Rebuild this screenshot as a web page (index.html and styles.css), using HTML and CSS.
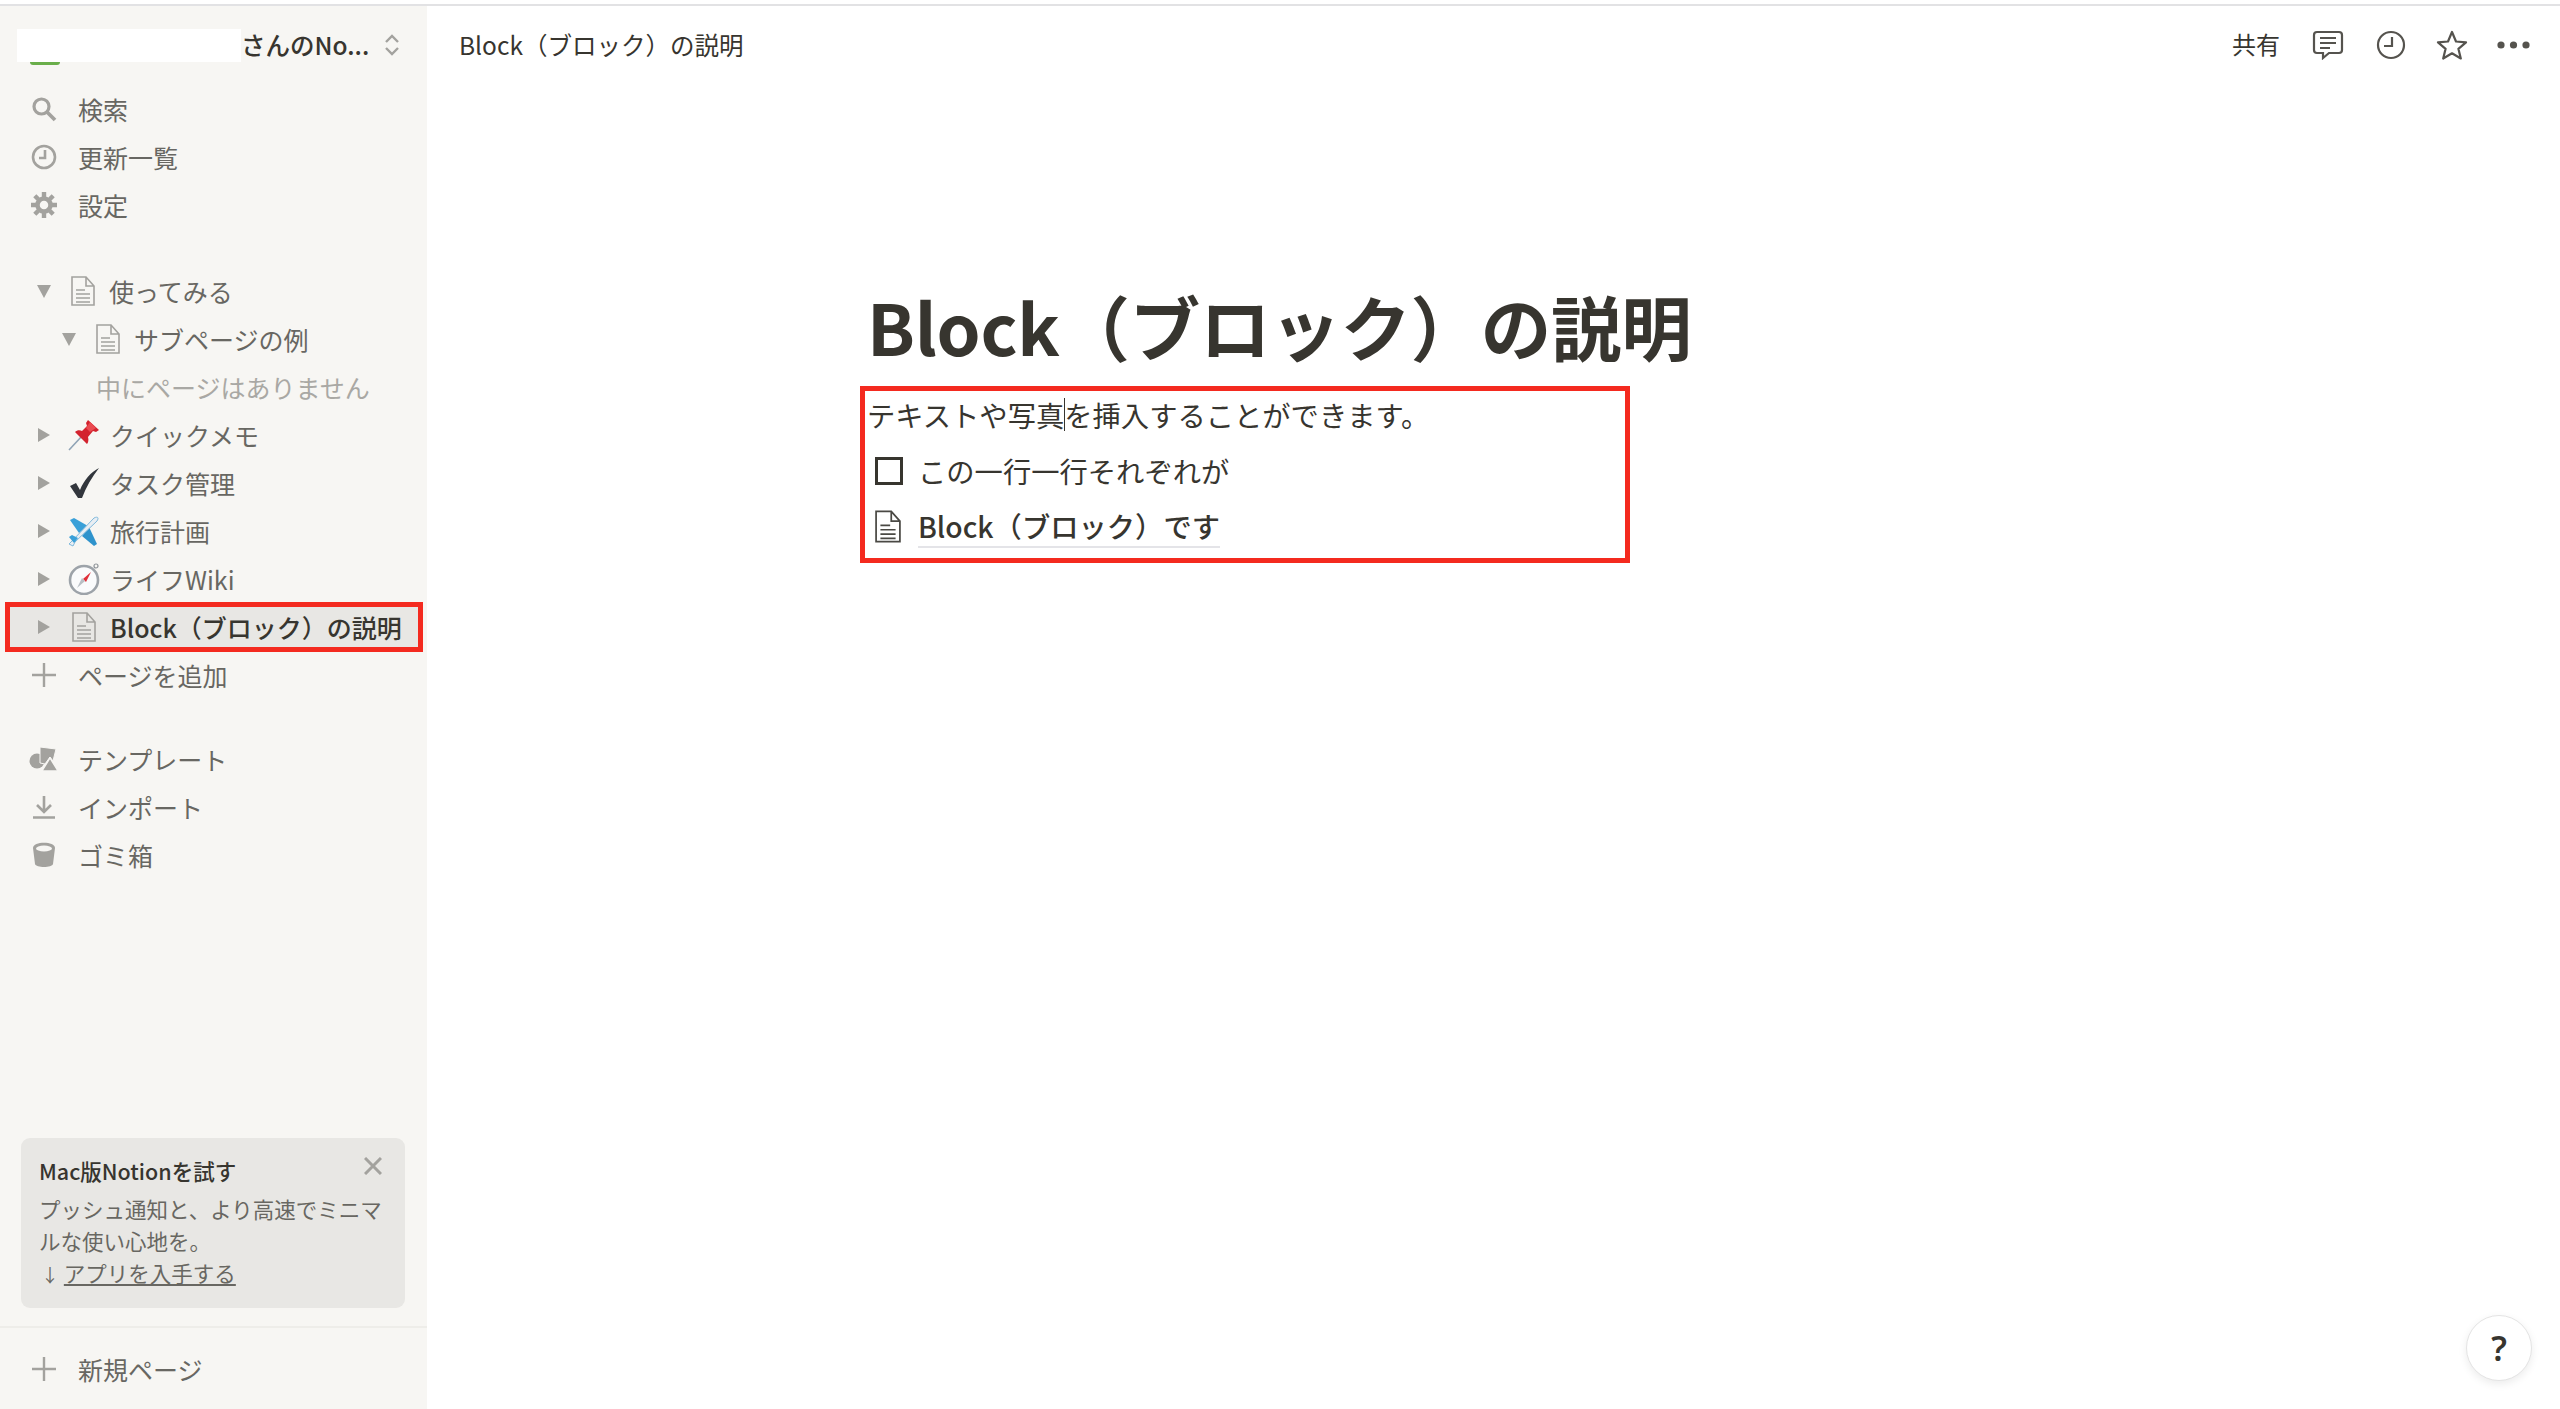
FILE: index.html
```html
<!DOCTYPE html>
<html lang="ja">
  <head>
    <meta charset="UTF-8" />
    <title>Block（ブロック）の説明</title>
    <link rel="stylesheet" href="styles.css">
  </head>
  <body>
    <svg class="defs" width="0" height="0" aria-hidden="true">
      <symbol id="doc" viewBox="0 0 24 30">
        <path d="M1 1h14l8 9v19H1z M15 1v9h8 M5 14h9 M5 18h14 M5 22h14 M5 26h14" fill="none" stroke="currentColor" stroke-width="1.6" />
      </symbol>
      <symbol id="plus" viewBox="0 0 24 24">
        <path d="M12 0v24M0 12h24" fill="none" stroke="currentColor" stroke-width="2.4" />
      </symbol>
    </svg>
    <div class="topline"></div>
    <div class="app">
      <aside class="sidebar">
        <div class="workspace">
          <div class="redacted"><span class="green"></span></div>
          <span class="workspace-name">さんのNo...</span>
          <svg class="updown" width="16" height="22" viewBox="0 0 16 22"><path d="M2 8l6-6 6 6M2 14l6 6 6-6" fill="none" stroke="#a3a29e" stroke-width="2.4" /></svg>
        </div>

        <nav class="group">
          <div class="row">
            <svg class="nav-icon" width="26" height="26" viewBox="0 0 26 26"><circle cx="10.5" cy="10.5" r="7.5" fill="none" stroke="currentColor" stroke-width="3.2" /><path d="M16 16l8 8" stroke="currentColor" stroke-width="3.8" /></svg>
            <span>検索</span>
          </div>
          <div class="row">
            <svg class="nav-icon" width="26" height="26" viewBox="0 0 26 26"><circle cx="13" cy="13" r="11" fill="none" stroke="currentColor" stroke-width="2.6" /><path d="M14 6v8H8" fill="none" stroke="currentColor" stroke-width="2.6" /></svg>
            <span>更新一覧</span>
          </div>
          <div class="row">
            <svg class="nav-icon" width="26" height="26" viewBox="0 0 26 26"><circle cx="13" cy="13" r="6.5" fill="none" stroke="currentColor" stroke-width="4.5" /><path d="M13 0v5M13 21v5M0 13h5M21 13h5M3.8 3.8l3.5 3.5M18.7 18.7l3.5 3.5M3.8 22.2l3.5-3.5M18.7 7.3l3.5-3.5" stroke="currentColor" stroke-width="4.4" /></svg>
            <span>設定</span>
          </div>
        </nav>

        <nav class="group tree">
          <div class="row tree-row">
            <span class="caret caret-open"></span>
            <svg class="page-icon"><use href="#doc" /></svg>
            <span>使ってみる</span>
          </div>
          <div class="row tree-row sub-row">
            <span class="caret caret-open"></span>
            <svg class="page-icon"><use href="#doc" /></svg>
            <span>サブページの例</span>
          </div>
          <div class="row empty-row">中にページはありません</div>
          <div class="row tree-row">
            <span class="caret"></span>
            <svg class="emoji" viewBox="0 0 32 32"><path d="M1 31l13-14" stroke="#8fa3b5" stroke-width="1.6" /><path d="M20 1l11 10-3 2-3-1-5 6c1 3 0 6-1 7L7 13c2-2 5-2 7-1l5-5-1-3z" fill="#d3232e" /><path d="M22 3l6 6-6 4-4-4z" fill="#ea4a50" /></svg>
            <span>クイックメモ</span>
          </div>
          <div class="row tree-row">
            <span class="caret"></span>
            <svg class="emoji" viewBox="0 0 32 32"><path d="M2 19l6-3 4 7C16 13 23 5 31 1 24 10 18 20 14 31h-4z" fill="#32363c" /></svg>
            <span>タスク管理</span>
          </div>
          <div class="row tree-row">
            <span class="caret"></span>
            <svg class="emoji" viewBox="0 0 32 32"><path d="M2 5l4-2 14 8-9 7z" fill="#3aa0d8" /><path d="M14 21l7-9 8 17-3 2z" fill="#2f93cc" /><path d="M3 27l-2 2 4 2 2-4 22-21c2-3 1-5-3-3z" fill="#e9eef3" stroke="#7fb9dc" stroke-width="1" /><path d="M1 22l3-2 6 3-4 5z" fill="#3aa0d8" /></svg>
            <span>旅行計画</span>
          </div>
          <div class="row tree-row">
            <span class="caret"></span>
            <svg class="emoji" viewBox="0 0 32 32"><circle cx="28" cy="3" r="2" fill="none" stroke="#8f9499" stroke-width="1.2" /><circle cx="16" cy="17" r="14" fill="#fafbfc" stroke="#9da3a9" stroke-width="2.6" /><path d="M23 9l-5 10-3-3z" fill="#e0303a" /><path d="M9 25l5-10 3 3z" fill="#b9bfc5" /></svg>
            <span>ライフWiki</span>
          </div>
          <div class="row tree-row selected">
            <span class="caret"></span>
            <svg class="page-icon"><use href="#doc" /></svg>
            <span>Block（ブロック）の説明</span>
          </div>
          <div class="row">
            <svg class="nav-icon plus"><use href="#plus" /></svg>
            <span>ページを追加</span>
          </div>
        </nav>

        <nav class="group extras">
          <div class="row">
            <svg class="nav-icon" width="30" height="26" viewBox="0 0 30 26"><circle cx="8" cy="15" r="7.5" fill="currentColor" /><path d="M11 1l16 2-3 12-3-4-5 7-5-1z" fill="currentColor" stroke="#f7f6f3" stroke-width="1" /><path d="M21 12l8 13H13z" fill="currentColor" stroke="#f7f6f3" stroke-width="1.4" /></svg>
            <span>テンプレート</span>
          </div>
          <div class="row">
            <svg class="nav-icon" width="24" height="24" viewBox="0 0 24 24"><path d="M12 1v15M5 10l7 7 7-7M1 22.500h22" fill="none" stroke="currentColor" stroke-width="2.6" /></svg>
            <span>インポート</span>
          </div>
          <div class="row">
            <svg class="nav-icon" width="24" height="26" viewBox="0 0 24 26"><path d="M1 6c0-7 22-7 22 0l-2 16c-1 4-17 4-18 0z" fill="currentColor" /><ellipse cx="12" cy="6.500" rx="8" ry="3" fill="#f7f6f3" /></svg>
            <span>ゴミ箱</span>
          </div>
        </nav>

        <div class="promo">
          <div class="promo-head">
            <span class="promo-title">Mac版Notionを試す</span>
            <svg width="18" height="18" viewBox="0 0 18 18"><path d="M1 1l16 16M17 1L1 17" stroke="#a3a29e" stroke-width="3" /></svg>
          </div>
          <p class="promo-text">プッシュ通知と、より高速でミニマルな使い心地を。</p>
          <p class="promo-text"><span class="promo-arrow">↓</span> <a class="promo-link">アプリを入手する</a></p>
        </div>

        <div class="new-page">
          <div class="row">
            <svg class="nav-icon plus"><use href="#plus" /></svg>
            <span>新規ページ</span>
          </div>
        </div>
      </aside>

      <main class="main">
        <header class="topbar">
          <span class="crumb">Block（ブロック）の説明</span>
          <div class="actions">
            <span class="share">共有</span>
            <svg class="action-comment" width="32" height="30" viewBox="0 0 32 30"><path d="M5 2h22a3 3 0 0 1 3 3v15a3 3 0 0 1-3 3H17l-6 5v-5H5a3 3 0 0 1-3-3V5a3 3 0 0 1 3-3z" fill="none" stroke="currentColor" stroke-width="2.2" /><path d="M8 8h16M8 13h16M8 18h10" stroke="currentColor" stroke-width="1.8" /></svg>
            <svg width="30" height="30" viewBox="0 0 30 30"><circle cx="15" cy="15" r="13" fill="none" stroke="currentColor" stroke-width="2.2" /><path d="M16 7v9H8" fill="none" stroke="currentColor" stroke-width="2.2" /></svg>
            <svg width="32" height="30" viewBox="0 0 32 30"><path d="M16 2l4 9.500 10 .8-7.600 6.500 2.400 9.700L16 23.300 7.200 28.500l2.400-9.700L2 12.300l10-.8z" fill="none" stroke="currentColor" stroke-width="2.2" stroke-linejoin="round" /></svg>
            <svg class="action-more" width="33" height="8" viewBox="0 0 33 8"><circle cx="4" cy="4" r="3.600" fill="currentColor" /><circle cx="16.500" cy="4" r="3.600" fill="currentColor" /><circle cx="29" cy="4" r="3.600" fill="currentColor" /></svg>
          </div>
        </header>

        <div class="page">
          <h1 class="page-title">Block（ブロック）の説明</h1>
          <div class="blocks">
            <div class="block">テキストや写真<span class="text-cursor"></span>を挿入することができます。</div>
            <div class="block">
              <span class="block-icon"><span class="checkbox"></span></span>
              <span>この一行一行それぞれが</span>
            </div>
            <div class="block">
              <span class="block-icon"><svg class="doc-big"><use href="#doc" /></svg></span>
              <span class="page-link">Block（ブロック）です</span>
            </div>
          </div>
        </div>

        <div class="help">?</div>
      </main>
    </div>
  </body>
</html>
```

FILE: styles.css
```css
html {
  font-family: "Noto Sans CJK JP", "Liberation Sans", sans-serif;
}

body {
  margin: 0;
  height: 1409px;
  overflow: hidden;
  background-color: #fff;
  color: #37352f;
  display: flex;
  flex-direction: column;
}

.defs {
  position: absolute;
}

.topline {
  height: 2px;
  margin-top: 4px;
  background-color: #e2e2e4;
}

.app {
  flex: 1;
  display: flex;
  min-height: 0;
}

/* sidebar */
.sidebar {
  width: 427px;
  flex-shrink: 0;
  display: flex;
  flex-direction: column;
  background-color: #f7f6f3;
  color: #686762;
  font-size: 25px;
}

.workspace {
  height: 79px;
  display: flex;
  align-items: center;
  padding-left: 17px;
  color: #37352f;
  font-weight: 500;
  font-size: 24.500px;
}

.redacted {
  width: 224px;
  height: 33px;
  margin-top: -1px;
  background-color: #fff;
  position: relative;
}

.green {
  position: absolute;
  left: 13px;
  top: 100%;
  width: 30px;
  height: 3px;
  border-radius: 0 0 3px 3px;
  background-color: #6aae4a;
}

.workspace-name {
  width: 126px;
  margin-top: -3px;
  white-space: nowrap;
}

.updown {
  margin-left: 17px;
  margin-top: -1px;
}

.row {
  height: 48px;
  display: flex;
  align-items: center;
  white-space: nowrap;
  padding-left: 28px;
}

.nav-icon {
  width: 32px;
  margin-right: 18px;
  color: #a3a29e;
  flex-shrink: 0;
}

.plus {
  width: 24px;
  height: 24px;
  margin: 0 22px 0 4px;
}

.tree {
  margin-top: 38px;
}

.extras {
  margin-top: 36px;
}

.tree-row {
  padding-left: 38px;
}

.sub-row {
  padding-left: 63px;
}

.empty-row {
  padding-left: 96px;
  color: #a9a8a4;
}

.caret {
  width: 0;
  height: 0;
  margin-right: 22px;
  border-top: 7px solid transparent;
  border-bottom: 7px solid transparent;
  border-left: 12px solid #a3a29e;
}

.caret-open {
  margin-right: 20px;
  margin-left: -1px;
  border-left: 7.500px solid transparent;
  border-right: 7.500px solid transparent;
  border-top: 13px solid #a3a29e;
  border-bottom: 0;
}

.page-icon {
  width: 24px;
  height: 30px;
  margin-right: 14px;
  color: #a3a29e;
  flex-shrink: 0;
}

.emoji {
  width: 32px;
  height: 32px;
  margin: 0 10px 0 -4px;
  flex-shrink: 0;
}

.selected {
  margin: 0 5px 0 6px;
  padding-left: 32px;
  background-color: #e8e7e4;
  color: #37352f;
  font-weight: 500;
  outline: 5px solid #f42a1f;
  outline-offset: -4px;
}

.promo {
  margin: auto 22px 18px 21px;
  height: 170px;
  box-sizing: border-box;
  padding: 17px 19px 0 18px;
  border-radius: 9px;
  background-color: #e8e7e4;
  font-size: 21.500px;
  line-height: 32px;
}

.promo-head {
  display: flex;
  align-items: flex-start;
  justify-content: space-between;
  padding-right: 4px;
  margin-bottom: 6px;
}

.promo-head svg {
  margin-top: 2px;
}

.promo-title {
  color: #37352f;
  font-weight: 500;
}

.promo-text {
  margin: 0;
}

.promo-arrow {
  margin-left: 2px;
  font-size: 18px;
}

.promo-link {
  text-decoration: underline;
}

.new-page {
  height: 81px;
  display: flex;
  align-items: center;
  border-top: 2px solid #eeede9;
}

/* main area */
.main {
  flex: 1;
  position: relative;
  min-width: 0;
}

.topbar {
  height: 77px;
  display: flex;
  align-items: center;
  justify-content: space-between;
  padding: 0 30px 0 32px;
  font-size: 24.500px;
}

.actions {
  display: flex;
  align-items: center;
  gap: 30px;
  color: #55534e;
  font-size: 24px;
}

.share {
  margin-right: 2px;
  padding-bottom: 3px;
  color: #37352f;
}

.action-comment {
  margin-right: 2px;
}

.action-more {
  margin-left: -1px;
}

.page {
  padding: 202px 0 0 440px;
}

.page-title {
  margin: 0;
  height: 101px;
  font-size: 70.500px;
  line-height: 80px;
  font-weight: 700;
  letter-spacing: -0.3px;
}

.blocks {
  width: 770px;
  height: 177px;
  box-sizing: border-box;
  margin-left: -7px;
  padding-left: 2px;
  border: 5px solid #f42a1f;
  font-size: 28.300px;
}

.block {
  height: 56px;
  box-sizing: border-box;
  padding-bottom: 9px;
  display: flex;
  align-items: center;
  white-space: nowrap;
}

.text-cursor {
  width: 1px;
  height: 33px;
  margin-right: -1px;
  background-color: #37352f;
}

.block-icon {
  width: 51px;
  padding-left: 8px;
  box-sizing: border-box;
  display: flex;
  align-items: center;
}

.checkbox {
  width: 28px;
  height: 28px;
  box-sizing: border-box;
  border: 3px solid #37352f;
}

.doc-big {
  width: 26px;
  height: 33px;
  color: #4a4944;
}

.page-link {
  font-weight: 500;
  line-height: 40px;
  border-bottom: 2px solid #e4e4e8;
}

.help {
  position: absolute;
  right: 28px;
  bottom: 28px;
  width: 66px;
  height: 66px;
  box-sizing: border-box;
  display: flex;
  align-items: center;
  justify-content: center;
  border: 1px solid #e4e4e4;
  border-radius: 50%;
  background-color: #fff;
  box-shadow: 0 3px 8px rgba(0, 0, 0, 0.08);
  font-family: "Noto Sans", sans-serif;
  font-size: 34px;
  font-weight: 600;
}
```
